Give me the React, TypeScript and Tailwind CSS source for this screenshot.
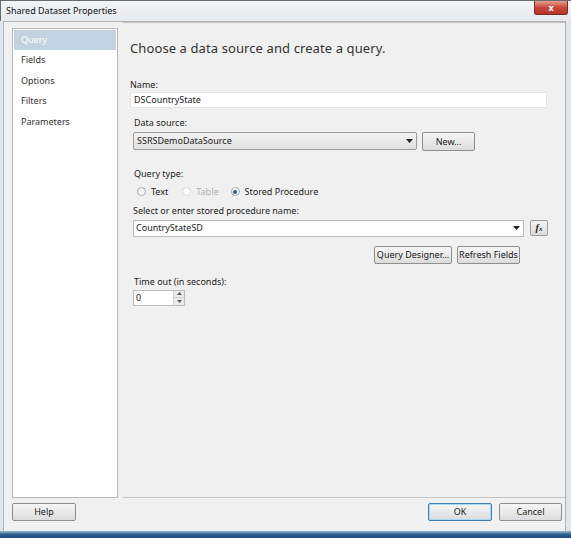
import React from 'react';

const font = "font-['Noto_Sans','Open_Sans',sans-serif]";

const Btn: React.FC<{ label: string; className?: string; focused?: boolean }> = ({ label, className = '', focused }) => (
    <button
        className={`h-[18px] rounded-[2px] border text-[9px] text-[#222] bg-gradient-to-b from-[#f6f6f6] to-[#dcdcdc] ${focused ? 'border-[#3c7fb1] shadow-[inset_0_0_0_1px_#a6dcf5]' : 'border-[#8f8f8f]'} ${className}`}
    >
        {label}
    </button>
);

const Arrow: React.FC = () => (
    <svg width="7" height="4" viewBox="0 0 7 4">
        <path d="M0 0h7L3.5 4z" fill="#222" />
    </svg>
);

const App: React.FC = () => {
    return (
        <div className={`w-[571px] h-[538px] flex flex-col bg-[#dfe5ec] ${font} text-[#222] overflow-hidden`}>
            {/* Title bar */}
            <div className="h-[22px] flex items-start justify-between pl-[5px] pr-[3px] bg-gradient-to-b from-[#f2f4f6] to-[#e6eaee] border-t border-l border-[#6c6c6c]">
                <span className="text-[9px] leading-[20px] text-[#111]">Shared Dataset Properties</span>
                <div className="w-[34px] h-[14px] rounded-b-[3px] bg-gradient-to-b from-[#e59c90] via-[#c8473a] to-[#b7362a] border border-[#7c2a24] border-t-0 flex items-center justify-center text-white text-[9px] font-bold">
                    x
                </div>
            </div>

            {/* Client area */}
            <div className="flex-1 flex flex-col ml-[3px] mr-[5px] bg-[#f0f0f0] border-t border-l border-r border-[#b4b4b4]">
                <div className="flex-1 flex gap-[4px] pl-[8px] pt-[6px]">
                    {/* Sidebar */}
                    <div className="w-[106px] h-[470px] bg-white border border-[#b9b9b9] p-[1px] flex flex-col text-[9px]">
                        <div className="h-[20px] bg-[#c3d2e0] text-white pl-[7px] leading-[20px]">Query</div>
                        {['Fields', 'Options', 'Filters', 'Parameters'].map((t) => (
                            <div key={t} className="h-[20.5px] pl-[7px] leading-[20.5px] text-[#333]">{t}</div>
                        ))}
                    </div>

                    {/* Content */}
                    <div className="flex-1 h-[476px] -mt-[6px] border-t border-b border-[#c6c6c6] pl-[8px] pr-[16px]">
                        <div className="text-[13px] text-[#333] mt-[16px] leading-[18px] tracking-[0.1px]">Choose a data source and create a query.</div>

                        <div className="text-[9px] mt-[22px] leading-[12px]">Name:</div>
                        <div className="mt-[1px] h-[16px] w-[417px] bg-white border border-[#e3e3e3] text-[9px] leading-[14px] pl-[3px]">DSCountryState</div>

                        <div className="pl-[3px]">
                            <div className="text-[9px] mt-[9px] leading-[12px] pl-[1px]">Data source:</div>
                            <div className="mt-[2px] flex items-center gap-[5px]">
                                <div className="h-[18px] w-[284px] rounded-[2px] border border-[#9c9c9c] bg-gradient-to-b from-[#f4f4f4] to-[#dedede] flex items-center justify-between pl-[3px] pr-[3px] text-[9px]">
                                    <span>SSRSDemoDataSource</span>
                                    <Arrow />
                                </div>
                                <Btn label="New..." className="w-[53px] h-[19px] mt-[1px]" />
                            </div>

                            <div className="text-[9px] mt-[17px] leading-[12px] pl-[1px]">Query type:</div>
                            <div className="mt-[5px] flex items-center text-[9px] pl-[4px]">
                                <span className="w-[9px] h-[9px] rounded-full border border-[#a8a8a8] bg-gradient-to-b from-[#eee] to-[#fff]" />
                                <span className="ml-[5px]">Text</span>
                                <span className="ml-[14px] w-[9px] h-[9px] rounded-full border border-[#d8d8d8] bg-white" />
                                <span className="ml-[5px] text-[#b4b4b4]">Table</span>
                                <span className="ml-[12px] w-[9px] h-[9px] rounded-full border border-[#a8a8a8] bg-white flex items-center justify-center">
                                    <span className="w-[4px] h-[4px] rounded-full bg-[#2a5a8a]" />
                                </span>
                                <span className="ml-[5px]">Stored Procedure</span>
                            </div>

                            <div className="text-[9px] mt-[6px] leading-[12px]">Select or enter stored procedure name:</div>
                            <div className="mt-[3px] flex items-center gap-[6px]">
                                <div className="h-[17px] w-[391px] bg-white border border-[#bcbcbc] flex items-center justify-between pl-[2px] pr-[3px] text-[9px]">
                                    <span>CountryStateSD</span>
                                    <Arrow />
                                </div>
                                <div className="w-[18px] h-[16px] rounded-[2px] border border-[#9c9c9c] bg-gradient-to-b from-[#f4f4f4] to-[#dcdcdc] flex items-center justify-center">
                                    <span className="font-['Liberation_Serif',serif] italic font-bold text-[10px] leading-none">
                                        f<span className="text-[7px]">x</span>
                                    </span>
                                </div>
                            </div>

                            <div className="mt-[9px] flex justify-end gap-[5px] w-[387px]">
                                <Btn label="Query Designer..." className="w-[78px]" />
                                <Btn label="Refresh Fields" className="w-[63px]" />
                            </div>

                            <div className="text-[9px] mt-[12px] leading-[12px] pl-[1px]">Time out (in seconds):</div>
                            <div className="mt-[2px] h-[16px] w-[52px] bg-white border border-[#bcbcbc] flex items-stretch">
                                <span className="flex-1 text-[9px] leading-[14px] pl-[2px]">0</span>
                                <div className="w-[11px] flex flex-col border-l border-[#d0d0d0] bg-[#eaeaea]">
                                    <div className="flex-1 flex items-center justify-center border-b border-[#cfcfcf]">
                                        <svg width="5" height="3" viewBox="0 0 5 3"><path d="M0 3h5L2.5 0z" fill="#555" /></svg>
                                    </div>
                                    <div className="flex-1 flex items-center justify-center">
                                        <svg width="5" height="3" viewBox="0 0 5 3"><path d="M0 0h5L2.5 3z" fill="#555" /></svg>
                                    </div>
                                </div>
                            </div>
                        </div>
                    </div>
                </div>

                {/* Footer */}
                <div className="h-[33px] flex items-start justify-between pl-[8px] pr-[3px] pt-[5px]">
                    <Btn label="Help" className="w-[64px]" />
                    <div className="flex gap-[7px]">
                        <Btn label="OK" focused className="w-[64px]" />
                        <Btn label="Cancel" className="w-[63px]" />
                    </div>
                </div>
            </div>
            <div className="h-[8px] bg-gradient-to-b from-[#9fb8cf] via-[#2c5f8e] to-[#1d4a78]" />
        </div>
    );
};

export default App;
